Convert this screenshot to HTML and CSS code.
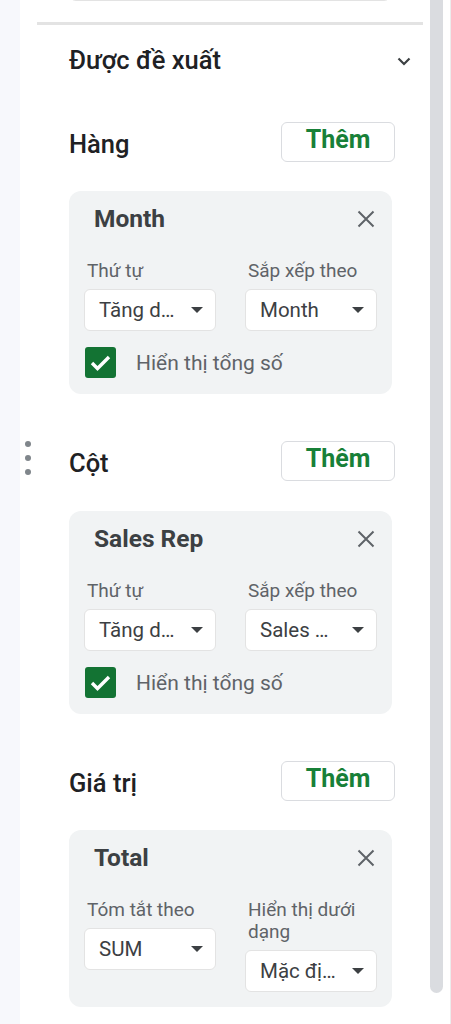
FILE: index.html
```html
<!DOCTYPE html>
<html lang="vi">
<head>
<meta charset="utf-8">
<title>Pivot table editor</title>
<link rel="stylesheet" href="styles.css">
</head>
<body>
<div class="app">
  <div class="strip">
    <div class="drag"><span></span><span></span><span></span></div>
  </div>
  <div class="panel">
    <div class="topbox"></div>
    <div class="sep"></div>
    <div class="suggest">
      <span class="suggest-title">Được đề xuất</span>
      <svg class="chev" width="14" height="9" viewBox="0 0 14 9"><path d="M1.5 1.5 L7 7 L12.5 1.5" fill="none" stroke="#3c4043" stroke-width="2.2"/></svg>
    </div>

    <div class="sec-row first">
      <span class="sec-title">Hàng</span>
      <button class="add">Thêm</button>
    </div>
    <div class="card">
      <div class="card-head">
        <span class="card-title">Month</span>
        <svg class="close" width="18" height="18" viewBox="0 0 18 18"><path d="M1.5 1.5 L16.5 16.5 M16.5 1.5 L1.5 16.5" stroke="#5f6368" stroke-width="2"/></svg>
      </div>
      <div class="fields">
        <div class="field">
          <div class="label">Thứ tự</div>
          <div class="select"><span>Tăng d…</span><i class="tri"></i></div>
        </div>
        <div class="field">
          <div class="label">Sắp xếp theo</div>
          <div class="select"><span>Month</span><i class="tri"></i></div>
        </div>
      </div>
      <div class="check-row">
        <span class="check"><svg width="31" height="31" viewBox="0 0 31 31"><path d="M7 16 L12.5 21.5 L24 10" fill="none" stroke="#fff" stroke-width="3.4"/></svg></span>
        <span class="check-label">Hiển thị tổng số</span>
      </div>
    </div>

    <div class="sec-row">
      <span class="sec-title">Cột</span>
      <button class="add">Thêm</button>
    </div>
    <div class="card card-2">
      <div class="card-head">
        <span class="card-title">Sales Rep</span>
        <svg class="close" width="18" height="18" viewBox="0 0 18 18"><path d="M1.5 1.5 L16.5 16.5 M16.5 1.5 L1.5 16.5" stroke="#5f6368" stroke-width="2"/></svg>
      </div>
      <div class="fields">
        <div class="field">
          <div class="label">Thứ tự</div>
          <div class="select"><span>Tăng d…</span><i class="tri"></i></div>
        </div>
        <div class="field">
          <div class="label">Sắp xếp theo</div>
          <div class="select"><span>Sales …</span><i class="tri"></i></div>
        </div>
      </div>
      <div class="check-row">
        <span class="check"><svg width="31" height="31" viewBox="0 0 31 31"><path d="M7 16 L12.5 21.5 L24 10" fill="none" stroke="#fff" stroke-width="3.4"/></svg></span>
        <span class="check-label">Hiển thị tổng số</span>
      </div>
    </div>

    <div class="sec-row">
      <span class="sec-title">Giá trị</span>
      <button class="add">Thêm</button>
    </div>
    <div class="card card-3">
      <div class="card-head">
        <span class="card-title">Total</span>
        <svg class="close" width="18" height="18" viewBox="0 0 18 18"><path d="M1.5 1.5 L16.5 16.5 M16.5 1.5 L1.5 16.5" stroke="#5f6368" stroke-width="2"/></svg>
      </div>
      <div class="fields">
        <div class="field">
          <div class="label">Tóm tắt theo</div>
          <div class="select"><span>SUM</span><i class="tri"></i></div>
        </div>
        <div class="field">
          <div class="label">Hiển thị dưới dạng</div>
          <div class="select"><span>Mặc đị…</span><i class="tri"></i></div>
        </div>
      </div>
    </div>
  </div>
  <div class="scroll">
    <div class="thumb"></div>
  </div>
</div>
</body>
</html>
```

FILE: styles.css
```css
* { box-sizing: border-box; }
html, body { margin: 0; padding: 0; }
body {
  font-family: Roboto, "Noto Sans", "Liberation Sans", sans-serif;
  color: #202124;
  background: #fff;
  width: 451px;
  height: 1024px;
  overflow: hidden;
}
.app {
  display: flex;
  height: 1024px;
}
.strip {
  width: 20px;
  flex: 0 0 20px;
  background: #f7f8fc;
  position: relative;
}
.drag {
  position: absolute;
  left: 25px;
  top: 441px;
  display: flex;
  flex-direction: column;
  gap: 8px;
  z-index: 2;
}
.drag span {
  width: 6px;
  height: 6px;
  border-radius: 50%;
  background: #80868b;
}
.panel {
  width: 408px;
  flex: 0 0 408px;
  padding: 0 33px 0 49px;
  background: #fff;
}
.topbox {
  height: 40px;
  margin: -39px 3px 0 -1px;
  border: 1px solid #e3e3e3;
  border-radius: 8px;
}
.sep {
  height: 3px;
  margin: 21px -28px 0 -32px;
  background: #e3e3e3;
}
.suggest {
  height: 70px;
  display: flex;
  align-items: center;
  justify-content: space-between;
  margin-right: -17px;
}
.suggest-title {
  font-size: 25.5px;
  font-weight: 500;
  color: #202124;
}
.chev { margin-right: 1px; margin-top: 2px; }
.sec-row {
  height: 40px;
  display: flex;
  align-items: center;
  justify-content: space-between;
  margin-top: 47px;
}
.sec-row.first { margin-top: 27px; }
.sec-title {
  font-size: 25.5px;
  font-weight: 500;
  color: #202124;
  padding-top: 3px;
}
.add {
  width: 114px;
  height: 40px;
  border: 1px solid #dadce0;
  border-radius: 6px;
  background: #fff;
  font-family: inherit;
  font-size: 25px;
  font-weight: 700;
  color: #188038;
  padding: 0 0 5px;
}
.card {
  margin: 29px 3px 0 0;
  background: #f1f3f4;
  border-radius: 12px;
  padding: 14px 15px 16px;
}
.card-2 { margin-top: 30px; }
.card-3 { padding-bottom: 15px; }
.card-head {
  height: 27px;
  display: flex;
  align-items: center;
  justify-content: space-between;
}
.card-title {
  padding-left: 10px;
  font-size: 24.5px;
  font-weight: 700;
  color: #3c4043;
}
.close { margin-right: 2px; }
.fields {
  margin-top: 28px;
  display: grid;
  grid-template-columns: 132px 132px;
  column-gap: 29px;
  align-items: start;
}
.label {
  font-size: 19px;
  line-height: 22px;
  color: #5f6368;
  padding-left: 3px;
}
.select {
  margin-top: 7px;
  height: 42px;
  background: #fff;
  border: 1px solid #e3e3e3;
  border-radius: 6px;
  display: flex;
  align-items: center;
  justify-content: space-between;
  padding: 0 12px 0 14px;
  font-size: 20.5px;
  color: #3c4043;
  white-space: nowrap;
}
.tri {
  width: 0;
  height: 0;
  border-left: 6.5px solid transparent;
  border-right: 6.5px solid transparent;
  border-top: 6.5px solid #3c4043;
}
.check-row {
  margin-top: 16px;
  display: flex;
  align-items: center;
  gap: 20px;
  padding-left: 1px;
}
.check {
  width: 31px;
  height: 31px;
  border-radius: 3px;
  background: #137333;
  display: block;
}
.check svg { display: block; }
.check-label {
  font-size: 21px;
  color: #5f6368;
}
.scroll {
  flex: 1;
  position: relative;
  background: #fff;
  border-right: 1px solid #ececec;
}
.thumb {
  margin-left: 2px;
  width: 13px;
  height: 993px;
  background: #dadce0;
  border-radius: 0 0 7px 7px;
}
```
